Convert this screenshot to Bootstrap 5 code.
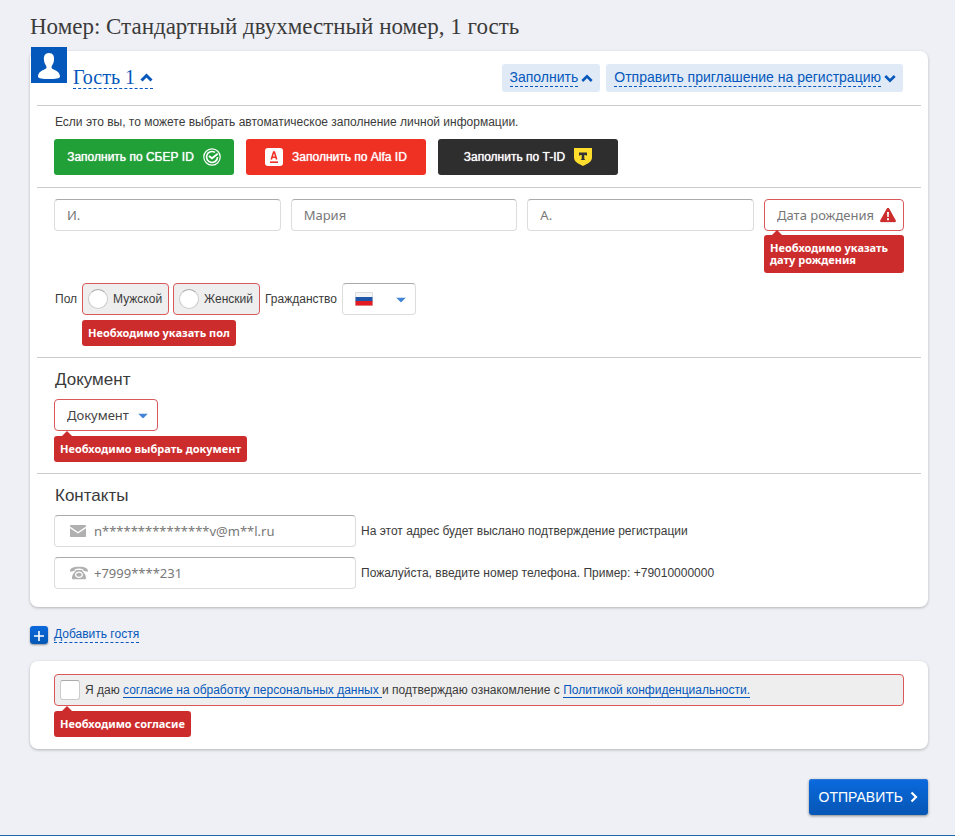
<!DOCTYPE html>
<html lang="ru">
<head>
<meta charset="utf-8">
<meta name="viewport" content="width=device-width, initial-scale=1">
<title>Регистрация гостя</title>
<link rel="stylesheet" href="https://cdn.jsdelivr.net/npm/bootstrap@5.3.0/dist/css/bootstrap.min.css">
<style>
:root { --blue: #0558bb; --err: #cd2c2d; --err-line: #d9585a; }
body { background: #eff0f5; color: #3b3b3b; font: 12px/16px "Liberation Sans", Arial, sans-serif; }
.page { padding: 12px 27px 0 30px; min-height: 100vh; border-bottom: 1px solid #2068a8; }
.page-title, .guest-link { font-family: "Liberation Serif", "Times New Roman", serif; }
.page-title { font-size: 23px; line-height: 30px; margin-bottom: 9px; }
.panel { background: #fff; border-radius: 8px; box-shadow: 0 1px 3px rgba(0,0,0,.25); }
.guest-panel { padding: 0 7px 18px; }
.panel-head { height: 55px; border-bottom: 1px solid #ccc; padding-right: 18px; }
.avatar { width: 36px; height: 36px; margin: -4px 6px 0 -6px; background: var(--blue); }
a { color: var(--blue); text-decoration: none; }
.guest-link { font-size: 20px; line-height: 22px; border-bottom: 1px dashed; margin-top: 15px; }
.actions { gap: 6px; }
.action { background: #e0eaf7; color: var(--blue); border: 0; border-radius: 3px; padding: 0 7px 0 8px; height: 28px; font-size: 14px; line-height: 17px; margin-top: 13px; gap: 3px; }
.dashed { border-bottom: 1px dashed; }
.block { padding: 0 17px; border-bottom: 1px solid #ccc; }
.block:last-child { border: 0; }
.fill-note { padding-top: 8px; margin-left: 1px; }
.fills { gap: 12px; padding: 9px 0 12px; }
.fill-btn { width: 180px; height: 36px; border: 0; border-radius: 3px; color: #fff; font-size: 12px; text-shadow: 0 0 1px #fff; gap: 9px; padding: 0; }
.sber { background: #21a038; }
.alfa { background: #ef3124; }
.tid { background: #2e2e2e; }
.field, .pick { height: 32px; border: 1px solid #ddd; border-top-color: #aaa; border-radius: 4px; background: #fff; font: 13px/18px "Noto Sans", Tahoma, sans-serif; color: #444; padding: 0 12px; }
.field::placeholder { color: #777; opacity: 1; }
.pick { appearance: none; width: 100%; }
.field.bad, .pick.bad { border-color: var(--err-line); }
.personal { padding-top: 11px; padding-bottom: 11px; }
.names { gap: 10px; }
.birth { width: 140px; }
.birth .field { padding-right: 24px; }
.birth .tip { margin-top: 4px; }
.over { position: absolute; pointer-events: none; top: 50%; transform: translateY(-50%); }
.at-end { right: 8px; }
.at-start { left: 16px; }
.caret { right: 10px; margin-top: 1px; }
.flag { left: 13px; }
.tip { position: relative; width: fit-content; background: var(--err); color: #fff; border-radius: 3px; font: bold 11px/12px "Noto Sans", Tahoma, sans-serif; padding: 7px 6px; }
.tip.arrow::before { content: ""; position: absolute; left: 8px; top: -5px; border: 5px solid transparent; border-top: 0; border-bottom-color: var(--err); }
.sex-tip, .low { margin-top: 5px; }
.person-row { gap: 5px; padding-left: 1px; margin-top: 10px; }
.row-label { line-height: 32px; }
.sexes { gap: 4px; }
.option { height: 32px; border: 1px solid var(--err-line); border-radius: 4px; background: #eee; padding: 0 6px 0 5px; gap: 5px; cursor: pointer; }
.option input { appearance: none; width: 20px; height: 20px; margin: 0; background: #fff; border: 1px solid #ccc; border-top-color: #aaa; flex: none; }
.option input[type=radio] { border-radius: 50%; }
.option input[type=checkbox] { border-radius: 3px; }
.option input:checked { background: var(--blue); }
.option a { border-bottom: 1px solid; }
.section { padding-top: 12px; padding-bottom: 11px; }
.section-title { font-size: 17px; line-height: 20px; margin: 0 1px 9px; }
.country { width: 74px; }
.document { width: 104px; }
.contact { width: 302px; }
.contact .field { padding-left: 39px; }
.contact-row { gap: 5px; }
.contact-row + .contact-row { margin-top: 10px; }
.add { margin-top: 19px; gap: 6px; height: 18px; width: fit-content; }
.plus { width: 18px; height: 18px; border-radius: 3px; background: linear-gradient(#0b69dc, #0558b5); box-shadow: 0 1px 2px rgba(0,0,0,.4); }
.consent-panel { margin-top: 17px; padding: 13px 24px 12px; }
.submit { margin-top: 30px; height: 36px; border: 0; border-radius: 3px; padding: 0 10px 1px 10px; gap: 7px; color: #fff; font-size: 14px; background: linear-gradient(#0a6ade, #0656b4); box-shadow: 0 1px 3px rgba(0,0,0,.45), inset 0 1px #2c76d4; }
</style>
</head>
<body>
<main class="page">
  <h1 class="page-title fw-normal">Номер: Стандартный двухместный номер, 1 гость</h1>
  <form>
    <section class="panel guest-panel">
      <div class="panel-head d-flex align-items-start">
        <svg class="avatar" viewBox="0 0 36 36" aria-hidden="true"><path fill="#fff" d="M18 6c-4 0-5.500 3-5 7 .2 3 1.300 4.500 2.200 6 .7 1.600.2 2.500-1.500 3.300C10 24 7.300 25.500 7 29.500 7 31.500 12 32 18 32s11-.5 11-2.500c-.3-4-3-5.500-6.700-7.200-1.700-.8-2.200-1.700-1.500-3.300.9-1.500 2-3 2.200-6 .5-4-1-7-5-7z"/></svg>
        <a href="#guest" class="guest-link">Гость 1 <svg width="13" height="9" viewBox="0 0 13 9" class="mb-1" aria-hidden="true"><path d="M1.500 7.500l5-5 5 5" fill="none" stroke="currentColor" stroke-width="3"/></svg></a>
        <div class="d-flex ms-auto actions">
          <button type="button" class="action d-flex align-items-center"><span class="dashed">Заполнить</span><svg width="12" height="9" viewBox="0 0 12 9" aria-hidden="true"><path d="M1.300 7L6 2.300 10.700 7" fill="none" stroke="currentColor" stroke-width="2.600"/></svg></button>
          <button type="button" class="action d-flex align-items-center"><span class="dashed">Отправить приглашение на регистрацию</span><svg width="12" height="9" viewBox="0 0 12 9" aria-hidden="true"><path d="M1.300 2L6 6.700 10.700 2" fill="none" stroke="currentColor" stroke-width="2.600"/></svg></button>
        </div>
      </div>
      <div class="block" id="guest">
        <p class="mb-0 fill-note">Если это вы, то можете выбрать автоматическое заполнение личной информации.</p>
        <div class="d-flex flex-wrap fills">
          <button type="button" class="fill-btn sber d-flex align-items-center justify-content-center">Заполнить по СБЕР ID <svg width="18" height="18" viewBox="0 0 18 18" fill="none" stroke="#fff" aria-hidden="true"><circle cx="9" cy="9" r="8.200" stroke-width="1.200"/><path d="M12 4.400A5.500 5.500 0 1 0 14.500 9" stroke-width="1.700"/><path d="M6 8l3 2.200 5.800-4.400" stroke-width="2"/></svg></button>
          <button type="button" class="fill-btn alfa d-flex align-items-center justify-content-center"><svg width="18" height="18" viewBox="0 0 18 18" fill="none" stroke="#ef3124" aria-hidden="true"><rect width="18" height="18" rx="3" fill="#fff" stroke="none"/><path d="M6.300 11.500L8.600 4h.8l2.300 7.500M7.200 9.200h3.600" stroke-width="1.600"/><path d="M5 14.200h8" stroke-width="1.600"/></svg> Заполнить по Alfa ID</button>
          <button type="button" class="fill-btn tid d-flex align-items-center justify-content-center">Заполнить по T-ID <svg width="18" height="18" viewBox="0 0 18 18" aria-hidden="true"><path fill="#ffdd2d" d="M0 0h18v9c0 4-2 5.600-9 9-7-3.400-9-5-9-9z"/><path fill="#333" d="M5 4.500h8v3.300l-1.800-.8h-.9v3.700l1 1.300H6.700l1-1.300V7h-.9L5 7.800z"/></svg></button>
        </div>
      </div>
      <div class="block personal">
        <div class="d-flex align-items-start names">
          <input class="field flex-fill w-100" type="text" placeholder="И." aria-label="Фамилия">
          <input class="field flex-fill w-100" type="text" placeholder="Мария" aria-label="Имя">
          <input class="field flex-fill w-100" type="text" placeholder="А." aria-label="Отчество">
          <div class="birth flex-shrink-0">
            <div class="position-relative d-flex">
              <input class="field bad w-100" type="text" placeholder="Дата рождения" aria-label="Дата рождения" aria-describedby="birth-tip">
              <svg class="over at-end" width="16" height="15" viewBox="0 0 16 15" aria-hidden="true"><path d="M8 .3c.6 0 1 .4 1.300.9l6.400 11.600c.5 1 0 2-1 2H1.300c-1 0-1.500-1-1-2L6.700 1.200C7 .7 7.400.3 8 .3z" fill="#cd2c2d"/><path d="M7 4.500h2L8.700 9.500H7.300zM7 10.700h2v2H7z" fill="#fff"/></svg>
            </div>
            <div class="tip arrow w-100" id="birth-tip">Необходимо указать дату рождения</div>
          </div>
        </div>
        <div class="d-flex align-items-start person-row">
          <span class="row-label" id="sex-label">Пол</span>
          <div role="radiogroup" aria-labelledby="sex-label">
            <div class="d-flex sexes">
              <label class="option d-flex align-items-center"><input type="radio" name="sex">Мужской</label>
              <label class="option d-flex align-items-center"><input type="radio" name="sex">Женский</label>
            </div>
            <div class="tip sex-tip">Необходимо указать пол</div>
          </div>
          <label class="row-label" for="country">Гражданство</label>
          <div class="country position-relative">
            <select class="pick" id="country"><option>&nbsp;</option></select>
            <svg class="over flag" width="18" height="14" viewBox="0 0 18 14" aria-hidden="true"><path fill="#f5f5f5" stroke="#ddd" d="M.5.500h17v13H.5z"/><path fill="#2056a8" d="M.5 5h17v4.500H.5z"/><path fill="#e31b23" d="M.5 9h17v4.500H.5z"/></svg>
            <svg class="over caret" width="10" height="5" viewBox="0 0 10 5" aria-hidden="true"><path d="M0 0h10L5 5z" fill="#4285d6"/></svg>
          </div>
        </div>
      </div>
      <div class="block section">
        <h2 class="section-title fw-normal">Документ</h2>
        <div class="document position-relative">
          <select class="pick bad d-block" aria-label="Документ" aria-describedby="doc-tip"><option>Документ</option></select>
          <svg class="over caret" width="10" height="5" viewBox="0 0 10 5" aria-hidden="true"><path d="M0 0h10L5 5z" fill="#4285d6"/></svg>
        </div>
        <div class="tip arrow low" id="doc-tip">Необходимо выбрать документ</div>
      </div>
      <div class="block section pb-0">
        <h2 class="section-title fw-normal">Контакты</h2>
        <div class="d-flex align-items-center contact-row">
          <div class="contact position-relative">
            <input class="field w-100 d-block" id="email" type="text" placeholder="n***************v@m**l.ru">
            <svg class="over at-start" width="16" height="12" viewBox="0 0 16 12" fill="#b0b0b0" aria-hidden="true"><path d="M0 1c0-.6.4-1 1-1h14c.6 0 1 .4 1 1v.6L8 7 0 1.600z"/><path d="M0 3.200L8 8.600l8-5.400V11c0 .6-.4 1-1 1H1c-.6 0-1-.4-1-1z"/></svg>
          </div>
          <label for="email">На этот адрес будет выслано подтверждение регистрации</label>
        </div>
        <div class="d-flex align-items-center contact-row">
          <div class="contact position-relative">
            <input class="field w-100 d-block" id="phone" type="tel" placeholder="+7999****231">
            <svg class="over at-start" width="18" height="13" viewBox="0 0 18 13" fill="#b0b0b0" aria-hidden="true"><path d="M0 4.500C0 1.500 4 0 9 0s9 1.500 9 4.500c0 .5-.3.800-.8.700L14 4.600c-.5-.1-.7-.4-.7-.9V2.900C12 2.300 10.600 2.100 9 2.100s-3 .2-4.300.8v.8c0 .5-.2.800-.7.900L.8 5.200C.3 5.300 0 5 0 4.500z"/><path fill-rule="evenodd" d="M6 3.500h6c1 2.500 4 4 4 8 0 1-.4 1.500-1.300 1.500H3.300C2.400 13 2 12.500 2 11.500c0-4 3-5.500 4-8zM9 5c-2.300 0-4 1.400-4 3.200s1.700 3.200 4 3.200 4-1.400 4-3.200S11.300 5 9 5zm0 1.200c1.600 0 2.700.9 2.700 2s-1.100 2-2.700 2-2.700-.9-2.700-2 1.100-2 2.700-2z"/><ellipse cx="9" cy="8.200" rx="1.500" ry="1.100"/></svg>
          </div>
          <label for="phone">Пожалуйста, введите номер телефона. Пример: +79010000000</label>
        </div>
      </div>
    </section>
    <a href="#add" class="add d-flex align-items-start">
      <svg class="plus" viewBox="0 0 18 18" aria-hidden="true"><path d="M9 5v10M4 10h10" stroke="#fff" stroke-width="1.600"/></svg>
      <span class="dashed">Добавить гостя</span>
    </a>
    <section class="panel consent-panel">
      <div class="option d-flex align-items-center">
        <input type="checkbox" id="agree" aria-describedby="agree-tip">
        <label for="agree">Я даю <a href="#consent">согласие на обработку персональных данных&nbsp;</a>и подтверждаю ознакомление с <a href="#policy">Политикой конфиденциальности.</a></label>
      </div>
      <div class="tip arrow low" id="agree-tip">Необходимо согласие</div>
    </section>
    <button type="submit" class="submit d-flex align-items-center ms-auto">ОТПРАВИТЬ <svg width="8" height="12" viewBox="0 0 8 12" aria-hidden="true"><path d="M1.500 1.500L6 6l-4.500 4.500" fill="none" stroke="#fff" stroke-width="2.200"/></svg></button>
  </form>
</main>
<script src="https://cdn.jsdelivr.net/npm/bootstrap@5.3.0/dist/js/bootstrap.bundle.min.js"></script>
</body>
</html>
